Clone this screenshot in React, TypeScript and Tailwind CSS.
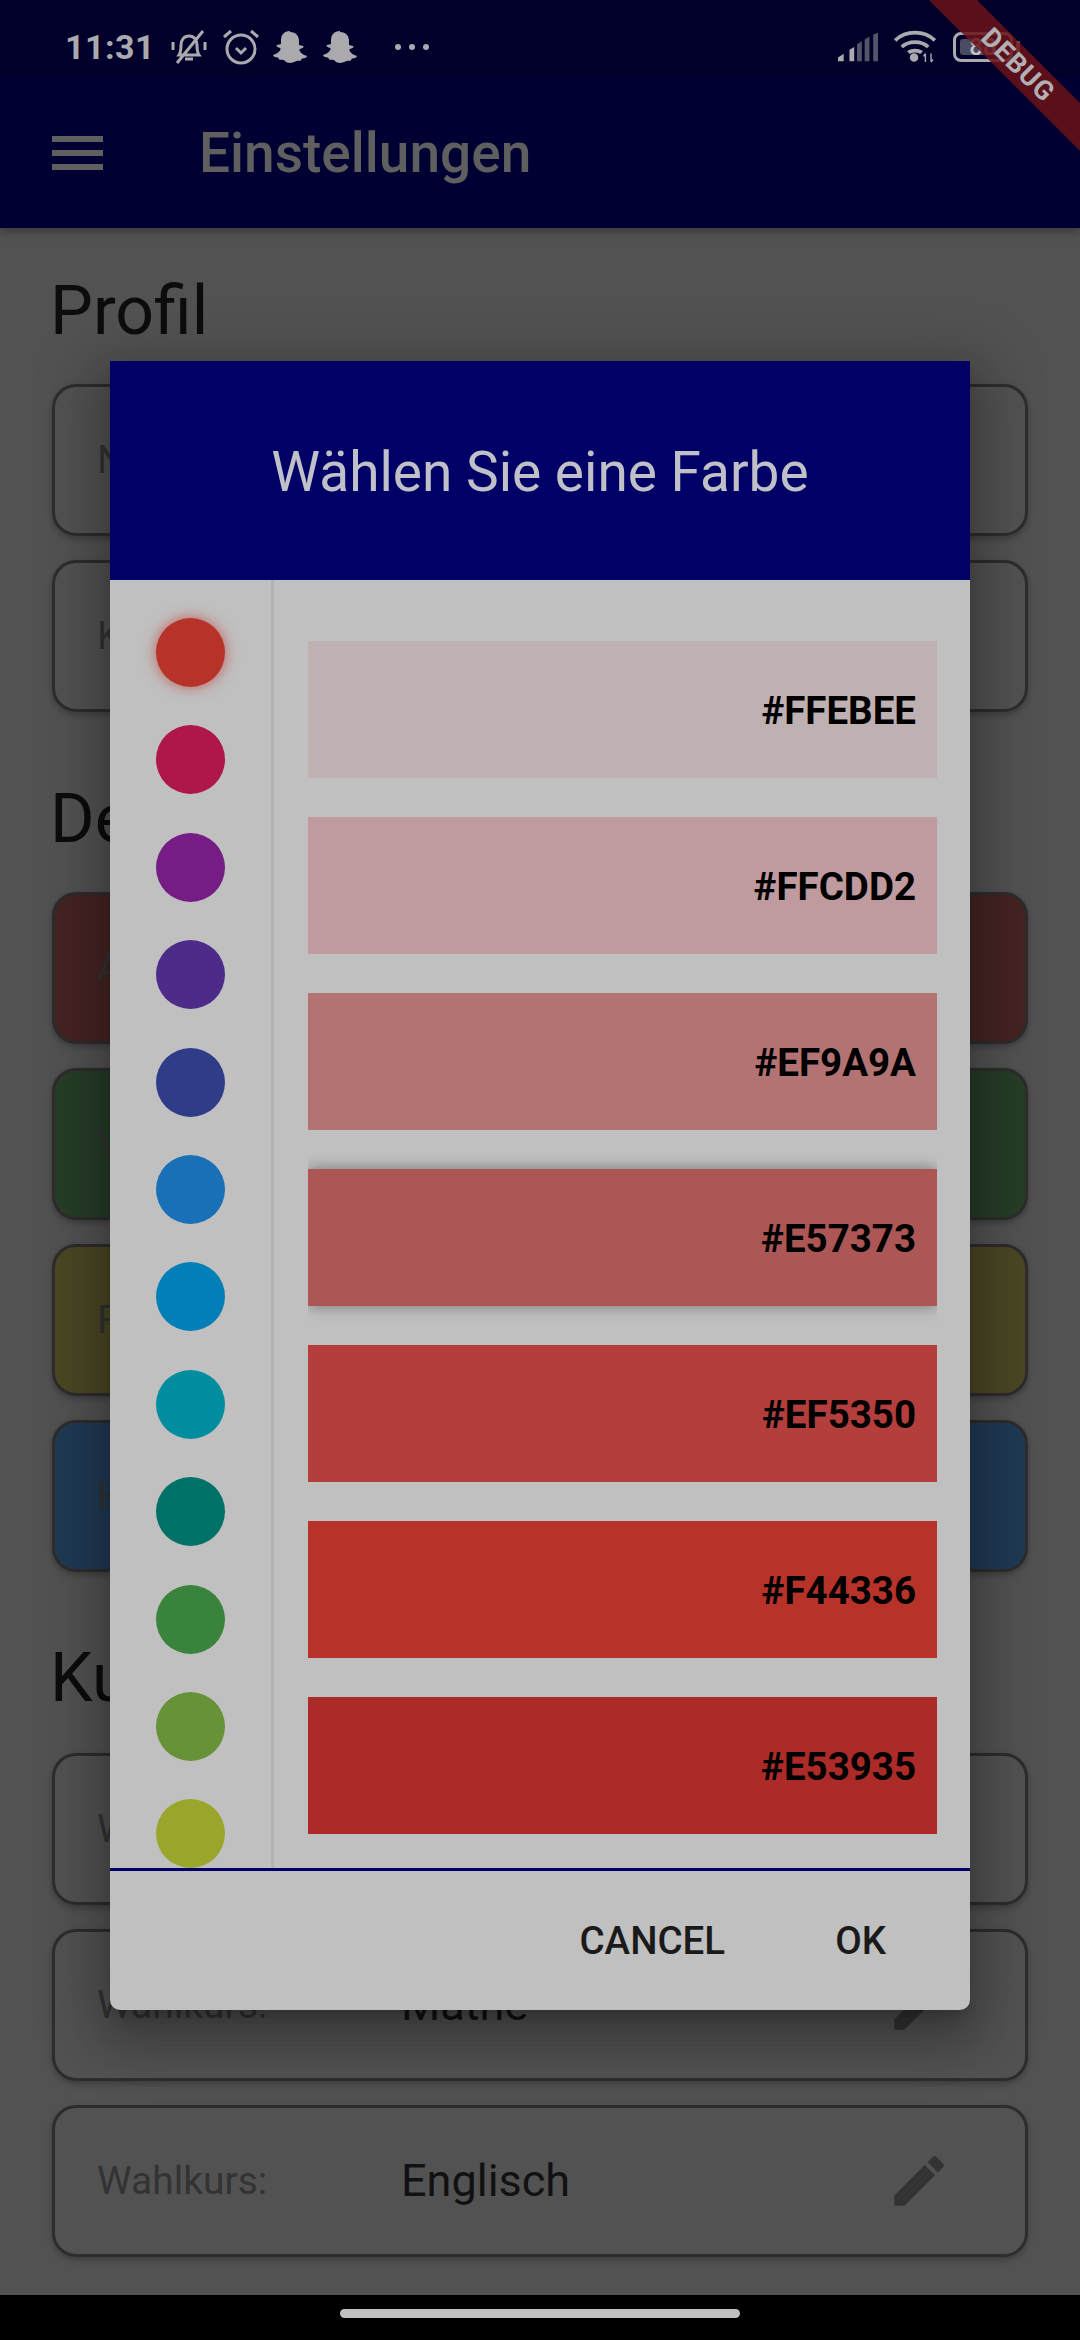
import React from "react";

const palette = ["#b73228", "#af164a", "#751d84", "#4d2b89", "#2f3d88", "#1970b6", "#027fb7", "#008d9f", "#007166", "#39833c", "#689238", "#9aa52b"];

const shades = [
    { hex: "#FFEBEE", bg: "#bfb0b2" },
    { hex: "#FFCDD2", bg: "#bf9a9e" },
    { hex: "#EF9A9A", bg: "#b37373" },
    { hex: "#E57373", bg: "#ac5656" },
    { hex: "#EF5350", bg: "#b33e3c" },
    { hex: "#F44336", bg: "#b73228" },
    { hex: "#E53935", bg: "#ac2b28" },
];

function Pencil() {
    return (
        <svg viewBox="0 0 24 24" className="w-[66px] h-[66px] shrink-0 fill-[#333333]">
            <path d="M3 17.25V21h3.75L17.81 9.94l-3.75-3.75L3 17.25zM20.71 7.04a1 1 0 0 0 0-1.41l-2.34-2.34a1 1 0 0 0-1.41 0l-1.83 1.83 3.75 3.75 1.83-1.83z" />
        </svg>
    );
}

function Ghost() {
    return (
        <svg viewBox="0 0 34 32" className="w-[34px] h-[32px] fill-[#a9a9ae]">
            <path d="M17 1c6 0 9 4 9 9v4l4 1c1 .6.4 1.6-.6 2-1.2.6-3 .8-3 1.8 0 2.2 3.4 5 7 6 .8.4.4 1.2-.4 1.6-1.4.6-3 .8-4 1.2-.8.6-.6 2-1.6 2.2-2 .2-3.4-.2-5 .8C20.8 31.4 19 32 17 32s-3.8-.6-5.4-2.4c-1.6-1-3-.6-5-.8-1-.2-.8-1.6-1.6-2.2-1-.4-2.6-.6-4-1.2-.8-.4-1.2-1.2-.4-1.6 3.6-1 7-3.8 7-6 0-1-1.8-1.2-3-1.8-1-.4-1.6-1.4-.6-2l4-1v-4c0-5 3-9 9-9z" />
        </svg>
    );
}

function Field({ label, value, className }: { label: string; value: string; className?: string }) {
    return (
        <div className={"h-[152px] rounded-[24px] border-[3px] border-[#2e2c2c] flex items-center pl-[42px] pr-[73px] shadow-[0_3px_6px_rgba(0,0,0,0.25)] " + (className || "")}>
            <span className="w-[304px] text-[39px] text-[#333333]">{label}</span>
            <span className="flex-1 text-[45px] text-[#111111]">{value}</span>
            <Pencil />
        </div>
    );
}

function Heading({ children }: { children: React.ReactNode }) {
    return <h2 className="-ml-[2px] text-[68px] leading-[80px] text-[#0c0c0c]">{children}</h2>;
}

export default function App() {
    return (
        <div className="relative w-[1080px] h-[2340px] overflow-hidden bg-[#525252] font-['Roboto',sans-serif]">
            {/* status bar + app bar */}
            <div className="h-[228px] bg-[#000033] shadow-[0_4px_8px_rgba(0,0,0,0.3)] flex flex-col">
                <div className="h-[78px] bg-[#00002a] flex items-center pl-[65px] pr-[67px] pt-[16px] text-[#a9a9ae]">
                    <span className="text-[34px] font-bold tracking-[0.5px]">11:31</span>
                    <svg viewBox="0 0 36 34" fill="none" stroke="#a9a9ae" strokeWidth="3" className="ml-[16px] w-[36px] h-[34px]">
                        <path d="M8 25c2-3 2-5 2-10 0-5 3-9 8-9s8 4 8 9c0 5 0 7 2 10H8zM14 29h8M32 1 6 33M2 12v8M34 12v8" />
                    </svg>
                    <svg viewBox="0 0 36 36" fill="none" stroke="#a9a9ae" strokeWidth="3" className="ml-[16px] w-[36px] h-[36px]">
                        <circle cx="18" cy="20" r="14" />
                        <path d="M13 19l5 5 5-5M1 8l7-6M35 8l-7-6" />
                    </svg>
                    <div className="ml-[14px]"><Ghost /></div>
                    <div className="ml-[16px]"><Ghost /></div>
                    <div className="ml-[38px] flex gap-[8px]">
                        <span className="w-[6px] h-[6px] rounded-full bg-[#a9a9ae]" />
                        <span className="w-[6px] h-[6px] rounded-full bg-[#a9a9ae]" />
                        <span className="w-[6px] h-[6px] rounded-full bg-[#a9a9ae]" />
                    </div>
                    <div className="ml-auto flex items-center">
                        <svg viewBox="0 0 42 30" className="w-[40px] h-[30px]">
                            <path d="M0 30v-4l6-4v8z" fill="#a9a9ae" />
                            <path d="M12 30V18l5-3v15z" fill="#a9a9ae" />
                            <path d="M20 30V12l5-3v21z" fill="#55556a" />
                            <path d="M28 30V7l5-3v26z" fill="#55556a" />
                            <path d="M37 30V2l5-2v30z" fill="#55556a" />
                        </svg>
                        <svg viewBox="0 0 44 36" fill="none" stroke="#a9a9ae" strokeWidth="4" className="ml-[16px] w-[42px] h-[34px]">
                            <path d="M1 11c11-11 31-11 42 0M8 18c7-7 21-7 28 0M15 24c3-3 11-3 14 0" />
                            <circle cx="21" cy="29" r="2.5" fill="#a9a9ae" />
                            <path d="M33 25v9M33 25l-2 3M39 34v-9M39 34l2-3" strokeWidth="1.5" />
                        </svg>
                        <div className="relative ml-[17px] w-[60px] h-[30px] rounded-[8px] border-[3px] border-[#a9a9ae] flex items-center justify-center">
                            <div className="absolute left-[4px] top-[4px] bottom-[4px] w-[36px] rounded-[3px] bg-[#4a4a60]" />
                            <span className="relative text-[24px] font-medium text-[#c4c4c8]">88</span>
                            <div className="absolute right-[-10px] top-[6px] w-[4px] h-[12px] rounded-r-[2px] bg-[#a9a9ae]" />
                        </div>
                    </div>
                </div>
                <div className="flex-1 flex items-center pl-[52px]">
                    <svg viewBox="0 0 51 34" className="w-[51px] h-[34px] fill-[#5f5f5f]">
                        <rect y="0" width="51" height="6" />
                        <rect y="14" width="51" height="6" />
                        <rect y="28" width="51" height="6" />
                    </svg>
                    <span className="ml-[96px] text-[55px] font-medium text-[#5f5f5f]">Einstellungen</span>
                </div>
            </div>

            {/* page behind the dialog */}
            <div className="px-[52px] pt-[43px]">
                <Heading>Profil</Heading>
                <div className="mt-[33px] flex flex-col gap-[24px]">
                    <Field label="Name:" value="" />
                    <Field label="Klasse:" value="" />
                </div>
                <div className="mt-[67px]"><Heading>Design</Heading></div>
                <div className="mt-[33px] flex flex-col gap-[24px]">
                    <Field label="Akzent:" value="" className="bg-[#452323]" />
                    <Field label="Vertretung:" value="" className="bg-[#263d27]" />
                    <Field label="Frei:" value="" className="bg-[#4a4724]" />
                    <Field label="Hausaufgabe:" value="" className="bg-[#203a54]" />
                </div>
                <div className="mt-[66px]"><Heading>Kurse</Heading></div>
                <div className="mt-[35px] flex flex-col gap-[24px]">
                    <Field label="Wahlkurs:" value="Sport" />
                    <Field label="Wahlkurs:" value="Mathe" />
                    <Field label="Wahlkurs:" value="Englisch" />
                </div>
            </div>

            {/* debug banner */}
            <div className="absolute right-[-88px] top-[48px] w-[300px] h-[34px] bg-[#6a1218]/85 rotate-45 flex items-center justify-center">
                <span className="text-[27px] font-bold text-[#b0b0b4] tracking-[1px]">DEBUG</span>
            </div>

            {/* color picker dialog */}
            <div className="absolute left-[110px] top-[361px] w-[860px] h-[1649px] rounded-b-[10px] bg-[#c0c0c0] overflow-hidden shadow-[0_24px_38px_3px_rgba(0,0,0,0.14),0_16px_60px_20px_rgba(0,0,0,0.2),0_11px_15px_-7px_rgba(0,0,0,0.2)] flex flex-col">
                <div className="h-[219px] shrink-0 bg-[#000066] flex items-center justify-center pt-[3px]">
                    <span className="text-[55px] text-[#c0c0c8]">Wählen Sie eine Farbe</span>
                </div>
                <div className="flex-1 flex min-h-0">
                    <div className="w-[164px] shrink-0 border-r-[3px] border-[#b2b2b2] flex flex-col items-center pt-[38px] gap-[38.4px] overflow-hidden">
                        {palette.map((c, i) => (
                            <div
                                key={c}
                                className={"w-[69px] h-[69px] shrink-0 rounded-full " + (i === 0 ? "shadow-[0_0_14px_rgba(190,50,40,0.7)]" : "")}
                                style={{ backgroundColor: c }}
                            />
                        ))}
                    </div>
                    <div className="flex-1 pl-[34px] pr-[33px] pt-[61px] flex flex-col gap-[39px]">
                        {shades.map((s, i) => (
                            <div
                                key={s.hex}
                                className={"h-[137px] shrink-0 flex items-center justify-end pr-[21px] pt-[2px] " + (i === 3 ? "shadow-[0_0_14px_rgba(0,0,0,0.4)] [clip-path:inset(-20px_0)]" : "")}
                                style={{ backgroundColor: s.bg }}
                            >
                                <span className="text-[38.5px] font-bold text-black">{s.hex}</span>
                            </div>
                        ))}
                    </div>
                </div>
                <div className="h-[142px] shrink-0 border-t-[3px] border-[#000066] flex items-center justify-end pr-[84px] gap-[110px]">
                    <span className="text-[38.5px] font-medium text-[#1a1a1a]">CANCEL</span>
                    <span className="text-[38.5px] font-medium text-[#1a1a1a]">OK</span>
                </div>
            </div>

            {/* nav bar */}
            <div className="absolute left-0 right-0 bottom-0 h-[45px] bg-black flex justify-center pt-[14px]">
                <div className="w-[400px] h-[9px] rounded-full bg-[#c0c0c0]" />
            </div>
        </div>
    );
}
